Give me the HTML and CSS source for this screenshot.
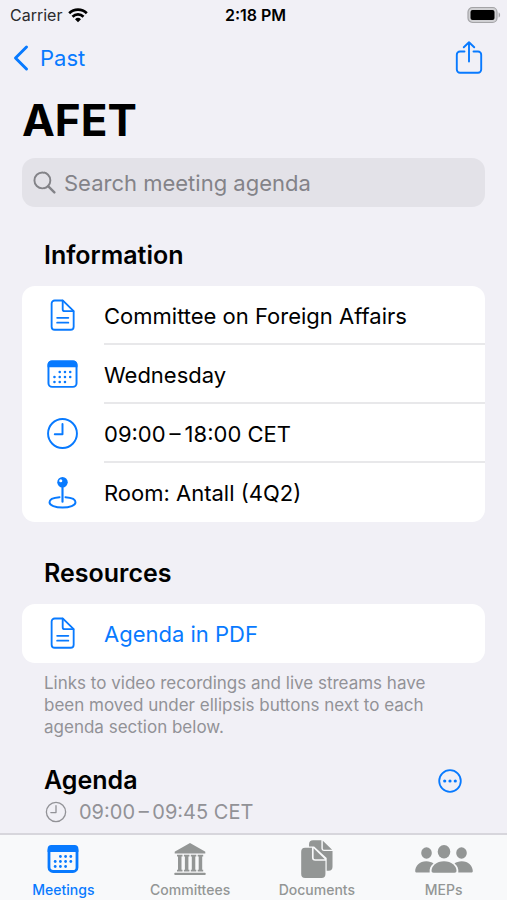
FILE: index.html
```html
<!DOCTYPE html>
<html lang="en">
<head>
<meta charset="utf-8">
<meta name="viewport" content="width=device-width, initial-scale=1">
<title>AFET</title>
<link rel="stylesheet" href="styles.css">
</head>
<body>
<svg class="sprite" aria-hidden="true">
  <symbol id="doc" viewBox="0 0 32 34">
    <g fill="none" stroke="currentColor" stroke-width="1.9" stroke-linejoin="round" stroke-linecap="round">
      <path d="M8 1.500h8.200L27.500 12.500V28.500a3.200 3.200 0 0 1-3.200 3.200H8a3.200 3.200 0 0 1-3.200-3.200V4.700A3.200 3.200 0 0 1 8 1.500z"/>
      <path d="M16.200 1.800v8.700a2 2 0 0 0 2 2h9"/>
      <path d="M10.500 19.400h11.500M10.500 24.400h11.500"/>
    </g>
  </symbol>
  <symbol id="calendar" viewBox="0 0 32 32">
    <rect x="2.400" y="3.400" width="27.200" height="24.600" rx="3.500" fill="none" stroke="currentColor" stroke-width="1.900"/>
    <path d="M1.500 9V6.500a4 4 0 0 1 4-4h21a4 4 0 0 1 4 4V9z" fill="currentColor"/>
    <g fill="currentColor">
      <circle cx="13.300" cy="13.500" r="1.250"/><circle cx="18.400" cy="13.500" r="1.250"/><circle cx="23.500" cy="13.500" r="1.250"/>
      <circle cx="8.200" cy="18.400" r="1.250"/><circle cx="13.300" cy="18.400" r="1.250"/><circle cx="18.400" cy="18.400" r="1.250"/><circle cx="23.500" cy="18.400" r="1.250"/>
      <circle cx="8.200" cy="23.300" r="1.250"/><circle cx="13.300" cy="23.300" r="1.250"/><circle cx="18.400" cy="23.300" r="1.250"/>
    </g>
  </symbol>
  <symbol id="clock" viewBox="0 0 32 32">
    <g fill="none" stroke="currentColor" stroke-width="1.900" stroke-linecap="round" stroke-linejoin="round">
      <circle cx="16" cy="16" r="14"/>
      <path d="M16 6.800V16.800H8.500"/>
    </g>
  </symbol>
  <symbol id="pin" viewBox="0 0 32 34">
    <path d="M13 21.800C7 22.200 2.600 24.200 2.600 27c0 3.300 6 5.500 13.400 5.500s13.400-2.200 13.400-5.500c0-2.800-4.400-4.800-10.400-5.200" fill="none" stroke="currentColor" stroke-width="2" stroke-linecap="round"/>
    <path d="M16 9v17.500" stroke="currentColor" stroke-width="2.200" stroke-linecap="round"/>
    <circle cx="16" cy="6.500" r="5.400" fill="currentColor"/>
    <circle cx="14.200" cy="4.900" r="1.600" fill="#fff"/>
  </symbol>
</svg>

<div class="status">
  <span class="carrier">Carrier
    <svg class="wifi" viewBox="0 0 20 15" aria-hidden="true">
      <g fill="none" stroke="#000" stroke-width="2.700">
        <path d="M1.200 5.300a12.600 12.600 0 0 1 17.600 0"/>
        <path d="M4.500 8.700a7.900 7.900 0 0 1 11 0"/>
      </g>
      <path d="M10 14.300l-3-3a4.300 4.300 0 0 1 6 0z"/>
    </svg>
  </span>
  <span class="time">2:18 PM</span>
  <svg class="battery" viewBox="0 0 34 18" aria-hidden="true">
    <rect x="1" y="1.500" width="29" height="15" rx="4.500" fill="#d0d0d3" stroke="#a4a4a7" stroke-width="1.200"/>
    <rect x="3.500" y="4" width="24" height="10" rx="2"/>
    <path d="M31.600 6.500c2 .6 2 4.400 0 5z" fill="#a4a4a7"/>
  </svg>
</div>

<nav class="navbar">
  <a class="back" href="#past">
    <svg viewBox="0 0 17 28" aria-hidden="true"><path d="M14.500 3L3.500 14l11 11" fill="none" stroke="currentColor" stroke-width="3" stroke-linecap="round" stroke-linejoin="round"/></svg>
    Past
  </a>
  <button class="share" type="button" aria-label="Share">
    <svg viewBox="0 0 28 34" aria-hidden="true">
      <g fill="none" stroke="currentColor" stroke-width="1.900" stroke-linecap="round" stroke-linejoin="round">
        <path d="M9.500 10.500H5a3.200 3.200 0 0 0-3.200 3.200V28.500A3.200 3.200 0 0 0 5 31.700h18a3.200 3.200 0 0 0 3.200-3.200V13.700A3.200 3.200 0 0 0 23 10.500h-4.500"/>
        <path d="M14 20.500V1.500M8.800 6.300L14 1.300l5.200 5"/>
      </g>
    </svg>
  </button>
</nav>

<main>
  <h1>AFET</h1>
  <label class="search">
    <svg viewBox="0 0 24 24" aria-hidden="true"><g fill="none" stroke="currentColor" stroke-linecap="round"><circle cx="9.800" cy="9.800" r="8.300" stroke-width="2"/><path d="M16 16l6.300 6.300" stroke-width="2.500"/></g></svg>
    <input type="search" placeholder="Search meeting agenda" aria-label="Search meeting agenda">
  </label>

  <section>
    <h2>Information</h2>
    <ul class="card">
      <li><svg class="icon"><use href="#doc"/></svg><span>Committee on Foreign Affairs</span></li>
      <li><svg class="icon"><use href="#calendar"/></svg><span>Wednesday</span></li>
      <li><svg class="icon"><use href="#clock"/></svg><span>09:00&#8201;–&#8201;18:00 CET</span></li>
      <li><svg class="icon"><use href="#pin"/></svg><span>Room: Antall (4Q2)</span></li>
    </ul>
  </section>

  <section>
    <h2>Resources</h2>
    <ul class="card">
      <li><svg class="icon"><use href="#doc"/></svg><a href="#pdf">Agenda in PDF</a></li>
    </ul>
    <p class="note">Links to video recordings and live streams have been moved under ellipsis buttons next to each agenda section below.</p>
  </section>

  <section class="agenda">
    <div>
      <h2>Agenda</h2>
      <p class="slot"><svg><use href="#clock"/></svg>09:00&#8201;–&#8201;09:45 CET</p>
    </div>
    <button class="more" type="button" aria-label="More">
      <svg viewBox="0 0 24 24" aria-hidden="true"><circle cx="12" cy="12" r="10.800" fill="none" stroke="currentColor" stroke-width="1.800"/><g fill="currentColor"><circle cx="6.700" cy="12" r="1.600"/><circle cx="12" cy="12" r="1.600"/><circle cx="17.300" cy="12" r="1.600"/></g></svg>
    </button>
  </section>
</main>

<nav class="tabs">
  <a class="active" href="#meetings">
    <svg viewBox="0 0 32 32" aria-hidden="true">
      <rect x="2" y="3.500" width="28" height="25" rx="4" fill="none" stroke="currentColor" stroke-width="2.800"/>
      <path d="M.6 9V6a4 4 0 0 1 4-4h22.800a4 4 0 0 1 4 4v3z" fill="currentColor"/>
      <g fill="currentColor">
        <circle cx="13.400" cy="13.500" r="1.400"/><circle cx="18.600" cy="13.500" r="1.400"/><circle cx="23.800" cy="13.500" r="1.400"/>
        <circle cx="8.200" cy="18.500" r="1.400"/><circle cx="13.400" cy="18.500" r="1.400"/><circle cx="18.600" cy="18.500" r="1.400"/><circle cx="23.800" cy="18.500" r="1.400"/>
        <circle cx="8.200" cy="23.500" r="1.400"/><circle cx="13.400" cy="23.500" r="1.400"/><circle cx="18.600" cy="23.500" r="1.400"/>
      </g>
    </svg>
    Meetings
  </a>
  <a href="#committees">
    <svg viewBox="0 0 32 32" aria-hidden="true">
      <g fill="currentColor">
        <path d="M16 0L31 8.500a.8.800 0 0 1 .3.700V10.500H.7V9.200a.8.800 0 0 1 .3-.7z"/>
        <path d="M3 11.800h5.500v1.700H7.500v13.300h1v1.700H3v-1.700h1V13.500H3zM9.900 11.800h5.500v1.700h-1v13.300h1v1.700H9.900v-1.700h1V13.500H9.900zM16.800 11.800h5.500v1.700h-1v13.300h1v1.700h-5.500v-1.700h1V13.500h-1zM23.700 11.800h5.500v1.700h-1v13.300h1v1.700h-5.500v-1.700h1V13.500h-1z"/>
        <rect x=".3" y="29.800" width="31.400" height="2.200" rx=".8"/>
      </g>
    </svg>
    Committees
  </a>
  <a href="#documents">
    <svg viewBox="0 0 33 39" aria-hidden="true">
      <g fill="currentColor">
        <path d="M12.500.2h8.500v8.600a2.500 2.500 0 0 0 2.500 2.500h9V27.500a4 4 0 0 1-4 4h-2V18.500L13.500 6.500H8.300V4.400A4.200 4.200 0 0 1 12.500.2z"/>
        <path d="M22.500.8l9.600 9.200h-8.200a1.400 1.400 0 0 1-1.400-1.400z"/>
        <path d="M4.200 8h7.100v10a3.400 3.400 0 0 0 3.400 3.400h10.500V35a4 4 0 0 1-4 4H4.200a4 4 0 0 1-4-4V12a4 4 0 0 1 4-4z"/>
        <path d="M13 8.500l11.600 11.200h-10A1.600 1.600 0 0 1 13 18.100z"/>
      </g>
    </svg>
    Documents
  </a>
  <a href="#meps">
    <svg viewBox="0 0 58 28" aria-hidden="true">
      <g fill="currentColor">
        <ellipse cx="11.500" cy="8" rx="5.300" ry="5.800"/>
        <ellipse cx="46.500" cy="8" rx="5.300" ry="5.800"/>
        <ellipse cx="29" cy="6.700" rx="6.300" ry="6.700"/>
        <path d="M29 16.300c7.500 0 12.500 5 12.500 9.500 0 1.300-.7 1.900-2 1.900h-21c-1.300 0-2-.6-2-1.900 0-4.500 5-9.500 12.500-9.500z"/>
        <path d="M11.300 16.300c3 0 5.500.9 7.200 2.300-2.800 2.100-4.300 5-3.800 8.900H2C.8 27.500.2 27 .2 25.900c0-4.500 4.400-9.600 11.100-9.600z"/>
        <path d="M46.700 16.300c-3 0-5.500.9-7.200 2.300 2.800 2.100 4.300 5 3.800 8.900H56c1.200 0 1.800-.5 1.800-1.600 0-4.500-4.400-9.600-11.100-9.600z"/>
      </g>
    </svg>
    MEPs
  </a>
</nav>
</body>
</html>
```
FILE: styles.css
```css
* {
  box-sizing: border-box;
}

body {
  margin: 0;
  min-height: 100vh;
  display: flex;
  flex-direction: column;
  background: #f1f0f6;
  color: #000;
  font-family: Inter, "Liberation Sans", sans-serif;
  font-size: 22px;
  line-height: 28px;
}

h1, h2, p, ul {
  margin: 0;
  padding: 0;
}

a {
  color: #087aff;
  text-decoration: none;
}

button {
  display: flex;
  padding: 0;
  border: 0;
  background: none;
  color: #087aff;
}

.sprite {
  display: none;
}

.status {
  display: grid;
  grid-template-columns: 1fr auto 1fr;
  align-items: center;
  height: 28px;
  padding: 2px 6px 0 10px;
  font-size: 16px;
  line-height: 20px;
}

.carrier {
  display: flex;
  align-items: center;
  gap: 6px;
  color: #2b2b2d;
}

.wifi {
  width: 20px;
  height: 15px;
}

.time {
  font-weight: 600;
}

.battery {
  justify-self: end;
  width: 34px;
  height: 18px;
}

.navbar {
  display: flex;
  align-items: center;
  justify-content: space-between;
  height: 60px;
  padding: 0 24px 0 12px;
}

.back {
  display: flex;
  align-items: center;
  gap: 11px;
}

.back svg {
  width: 17px;
  height: 28px;
}

.share svg {
  width: 28px;
  height: 34px;
}

main {
  padding: 0 22px 6px;
}

h1 {
  padding-top: 4px;
  font-size: 44px;
  line-height: 56px;
  font-weight: 700;
}

.search {
  display: flex;
  align-items: center;
  gap: 8px;
  height: 49px;
  margin-top: 10px;
  padding: 0 11px;
  border-radius: 13px;
  background: #e3e2e8;
  color: #838388;
}

.search svg {
  flex: none;
  width: 23px;
  height: 23px;
}

.search input {
  flex: 1;
  min-width: 0;
  padding: 0;
  border: 0;
  outline: 0;
  background: none;
  color: #000;
  font: inherit;
}

.search input::placeholder {
  color: #838388;
  opacity: 1;
}

h2 {
  padding: 0 22px;
  font-size: 25px;
  line-height: 32px;
  font-weight: 600;
}

section {
  padding-top: 32px;
}

.card {
  margin-top: 15px;
  border-radius: 13px;
  background: #fff;
  list-style: none;
  overflow: hidden;
}

section + section {
  padding-top: 35px;
}

.card li {
  display: flex;
  align-items: center;
  gap: 25px;
  height: 59px;
  padding-left: 24px;
}

.card li > :last-child {
  flex: 1;
  height: 59px;
  line-height: 60px;
}

.card li:not(:last-child) > :last-child {
  border-bottom: 2px solid #e8e8ea;
}

.icon {
  flex: none;
  width: 33px;
  height: 33px;
  color: #087aff;
}

.note {
  padding: 9px 22px 0;
  color: #929297;
  font-size: 17px;
  line-height: 22px;
}

section.agenda {
  display: flex;
  align-items: flex-start;
  justify-content: space-between;
  padding-top: 26px;
}

.slot {
  display: flex;
  align-items: center;
  gap: 12px;
  padding: 2px 23px 0;
  color: #929297;
  font-size: 20px;
}

.slot svg {
  width: 22px;
  height: 22px;
}

.more {
  padding: 5px 23px 0 0;
}

.more svg {
  width: 24px;
  height: 24px;
}

.tabs {
  position: sticky;
  bottom: 0;
  display: grid;
  grid-template-columns: repeat(4, 1fr);
  height: 67px;
  margin-top: auto;
  border-top: 2px solid #d7d6dc;
  background: #f8f9fa;
}

.tabs a {
  display: flex;
  flex-direction: column;
  align-items: center;
  justify-content: flex-end;
  gap: 3px;
  padding-bottom: 2px;
  color: #939695;
  font-size: 14px;
  line-height: 16px;
  font-weight: 500;
}

.tabs .active {
  color: #087aff;
}

.tabs svg {
  width: 32px;
  height: 40px;
}

.tabs a:last-child svg {
  width: 58px;
}
```
